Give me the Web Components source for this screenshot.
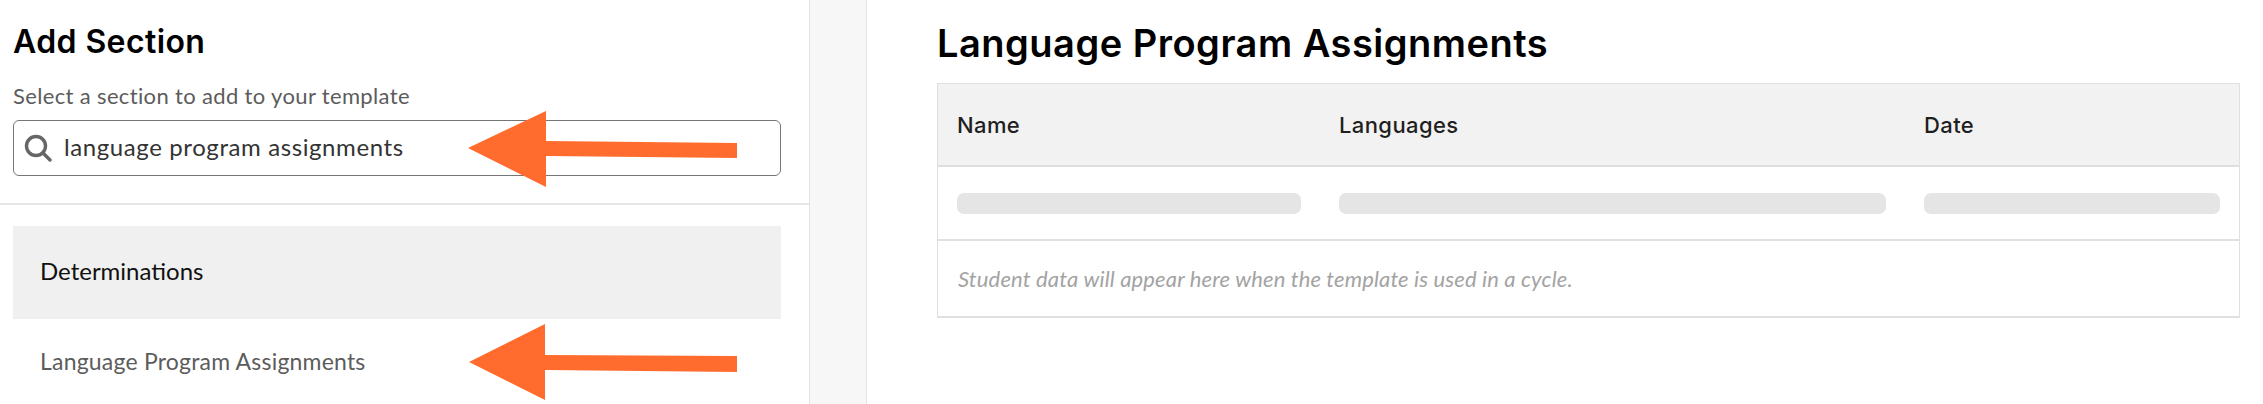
<!DOCTYPE html>
<html>
<head>
<meta charset="utf-8">
<title>Add Section</title>
<style>
html, body { margin: 0; padding: 0; background: #fff; }
body { font-family: Lato, "Liberation Sans", sans-serif; }
</style>
</head>
<body>
<template-editor>
  <add-section-panel slot="side" title="Add Section" hint="Select a section to add to your template" query="language program assignments">
    <section-group name="Determinations"></section-group>
    <section-item>Language Program Assignments</section-item>
  </add-section-panel>
  <assignments-table slot="main" title="Language Program Assignments" note="Student data will appear here when the template is used in a cycle."></assignments-table>
  <callout-arrow slot="over" style="left:468px;top:111px" points="0,37 78,0 78,30 269,32 269,47 78,45 78,76"></callout-arrow>
  <callout-arrow slot="over" style="left:469px;top:324px" points="0,38 76,0 76,31 268,32 268,48 76,46 76,76"></callout-arrow>
</template-editor>

<script>
class TemplateEditor extends HTMLElement {
    constructor() {
        super();
        const root = this.attachShadow({ mode: 'open' });
        root.innerHTML = `
            <style>
                :host{display:flex; position:relative; width:2263px; height:404px; overflow:hidden; background:#fff;}
                .side{width:809px; flex:none;}
                .gutter{width:56px; flex:none; background:#f7f7f7; border-left:1px solid #e3e3e3; border-right:1px solid #e3e3e3;}
                .main{flex:1; min-width:0;}
            </style>
            <div class="side"><slot name="side"></slot></div>
            <div class="gutter"></div>
            <div class="main"><slot name="main"></slot></div>
            <slot name="over"></slot>
        `;
    }
}
customElements.define('template-editor', TemplateEditor);

class AddSectionPanel extends HTMLElement {
    constructor() {
        super();
        const root = this.attachShadow({ mode: 'open' });
        root.innerHTML = `
            <style>
                :host{display:block; color:#000;}
                .top{padding:22px 28px 27px 13px; border-bottom:2px solid #e6e6e6;}
                h2{margin:0; font-family:Inter, Lato, sans-serif; font-size:32px; line-height:40px; font-weight:600; letter-spacing:.4px;}
                p{margin:21px 0 0 0; font-size:22px; line-height:26px; color:#5c5c5c; letter-spacing:.35px;}
                .search{display:flex; align-items:center; gap:12px; height:54px; margin-top:11px; padding-left:10px; border:1px solid #767676; border-radius:6px; font-size:24px; color:#333; letter-spacing:.6px;}
                .q{position:relative; top:-2px;}
                svg{display:block; flex:none;}
                .list{padding:21px 28px 0 13px;}
            </style>
            <div class="top">
                <h2></h2>
                <p></p>
                <div class="search">
                    <svg width="28" height="28" viewBox="0 0 28 28" fill="none" stroke="#666" stroke-width="3.4"><circle cx="12" cy="12" r="9.5"/><path d="M19 19 L26 26" stroke-linecap="round"/></svg>
                    <span class="q"></span>
                </div>
            </div>
            <div class="list"><slot></slot></div>
        `;
        root.querySelector('h2').textContent = this.getAttribute('title');
        root.querySelector('p').textContent = this.getAttribute('hint');
        root.querySelector('.q').textContent = this.getAttribute('query');
    }
}
customElements.define('add-section-panel', AddSectionPanel);

class SectionGroup extends HTMLElement {
    constructor() {
        super();
        const root = this.attachShadow({ mode: 'open' });
        root.innerHTML = `
            <style>
                :host{display:flex; align-items:center; height:93px; padding-left:27px; background:#f0f0f0; font-size:24px; color:#111;}
                span{position:relative; top:-2px;}
            </style>
            <span></span>
        `;
        root.querySelector('span').textContent = this.getAttribute('name');
    }
}
customElements.define('section-group', SectionGroup);

class SectionItem extends HTMLElement {
    constructor() {
        super();
        const root = this.attachShadow({ mode: 'open' });
        root.innerHTML = `
            <style>
                :host{display:flex; align-items:center; height:84px; padding-left:27px; font-size:23px; color:#5c5c5c; letter-spacing:.2px;}
            </style>
            <slot></slot>
        `;
    }
}
customElements.define('section-item', SectionItem);

class AssignmentsTable extends HTMLElement {
    constructor() {
        super();
        const root = this.attachShadow({ mode: 'open' });
        root.innerHTML = `
            <style>
                :host{display:block; padding:20px 23px 0 70px; color:#000;}
                h1{margin:0; font-family:Inter, Lato, sans-serif; font-size:38px; line-height:46px; font-weight:600; letter-spacing:.5px;}
                .table{margin-top:17px; border:1px solid #e0e0e0; border-bottom-width:2px;}
                .row{display:grid; grid-template-columns:344px 547px 296px; column-gap:38px; padding:0 19px; align-items:center;}
                .head{height:81px; background:#f2f2f2; border-bottom:2px solid #dedede; font-family:Inter, Lato, sans-serif; font-size:22px; font-weight:500; color:#1f1f1f; letter-spacing:.4px;}
                .body{height:72px; border-bottom:2px solid #e0e0e0;}
                .bar{height:21px; border-radius:7px; background:#e5e5e5;}
                .note{height:75px; display:flex; align-items:center; padding-left:20px; font-size:22px; font-style:italic; color:#a3a3a3; letter-spacing:.15px;}
            </style>
            <h1></h1>
            <div class="table">
                <div class="row head"><span>Name</span><span>Languages</span><span>Date</span></div>
                <div class="row body"><div class="bar"></div><div class="bar"></div><div class="bar"></div></div>
                <div class="note"></div>
            </div>
        `;
        root.querySelector('h1').textContent = this.getAttribute('title');
        root.querySelector('.note').textContent = this.getAttribute('note');
    }
}
customElements.define('assignments-table', AssignmentsTable);

// orange annotation arrows drawn on top of the screenshot
class CalloutArrow extends HTMLElement {
    constructor() {
        super();
        const root = this.attachShadow({ mode: 'open' });
        root.innerHTML = `
            <style>
                :host{display:block; position:absolute; width:270px; height:76px;}
                svg{display:block;}
            </style>
            <svg width="270" height="76" viewBox="0 0 270 76"><polygon fill="#ff6c2d"></polygon></svg>
        `;
        root.querySelector('polygon').setAttribute('points', this.getAttribute('points'));
    }
}
customElements.define('callout-arrow', CalloutArrow);
</script>
</body>
</html>
